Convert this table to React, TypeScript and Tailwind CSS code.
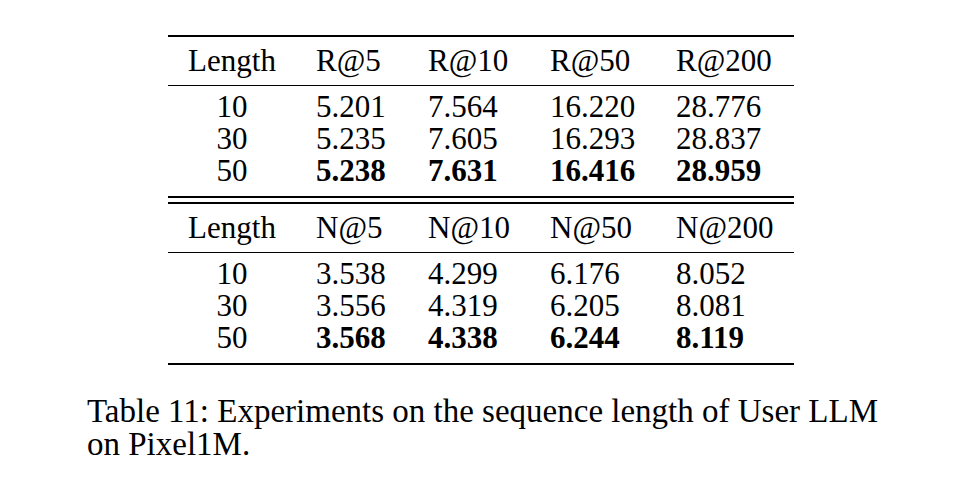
import React from "react";

type Block = {
  head: string[];
  rows: string[][];
};

const blocks: Block[] = [
  {
    head: ["Length", "R@5", "R@10", "R@50", "R@200"],
    rows: [
      ["10", "5.201", "7.564", "16.220", "28.776"],
      ["30", "5.235", "7.605", "16.293", "28.837"],
      ["50", "5.238", "7.631", "16.416", "28.959"],
    ],
  },
  {
    head: ["Length", "N@5", "N@10", "N@50", "N@200"],
    rows: [
      ["10", "3.538", "4.299", "6.176", "8.052"],
      ["30", "3.556", "4.319", "6.205", "8.081"],
      ["50", "3.568", "4.338", "6.244", "8.119"],
    ],
  },
];

const Row = ({ cells, bold }: { cells: string[]; bold?: boolean }) => (
  <div className="grid grid-cols-[148px_112px_122px_126px_118px] h-[32px] leading-[32px]">
    {cells.map((c, i) => (
      <div
        key={i}
        className={
          i === 0
            ? "text-center pr-[20px]"
            : bold
            ? "font-bold"
            : ""
        }
      >
        {c}
      </div>
    ))}
  </div>
);

const TableBlock = ({ block }: { block: Block }) => (
  <div>
    <div className="grid grid-cols-[148px_112px_122px_126px_118px] h-[48px] items-center">
      {block.head.map((h, i) => (
        <div key={i} className={i === 0 ? "text-center pr-[20px]" : ""}>
          {h}
        </div>
      ))}
    </div>
    <div className="h-px bg-black" />
    <div className="pt-[5px] pb-[9px]">
      {block.rows.map((r, i) => (
        <Row key={i} cells={r} bold={i === block.rows.length - 1} />
      ))}
    </div>
  </div>
);

export default function App() {
  return (
    <div className="w-[972px] h-[496px] bg-white text-black font-['Liberation_Serif',serif] overflow-hidden">
      <div className="pt-[35px] pl-[168px]">
        <div className="w-[626px] text-[31px]">
          <div className="h-[2px] bg-black" />
          <TableBlock block={blocks[0]} />
          <div className="h-[2px] bg-black" />
          <div className="h-[4px]" />
          <div className="h-[2px] bg-black" />
          <TableBlock block={blocks[1]} />
          <div className="h-[2px] bg-black" />
        </div>
      </div>
      <p className="pl-[87px] pt-[30px] w-[940px] text-[33px] leading-[33px]">
        Table 11: Experiments on the sequence length of User LLM
        <br />
        on Pixel1M.
      </p>
    </div>
  );
}
